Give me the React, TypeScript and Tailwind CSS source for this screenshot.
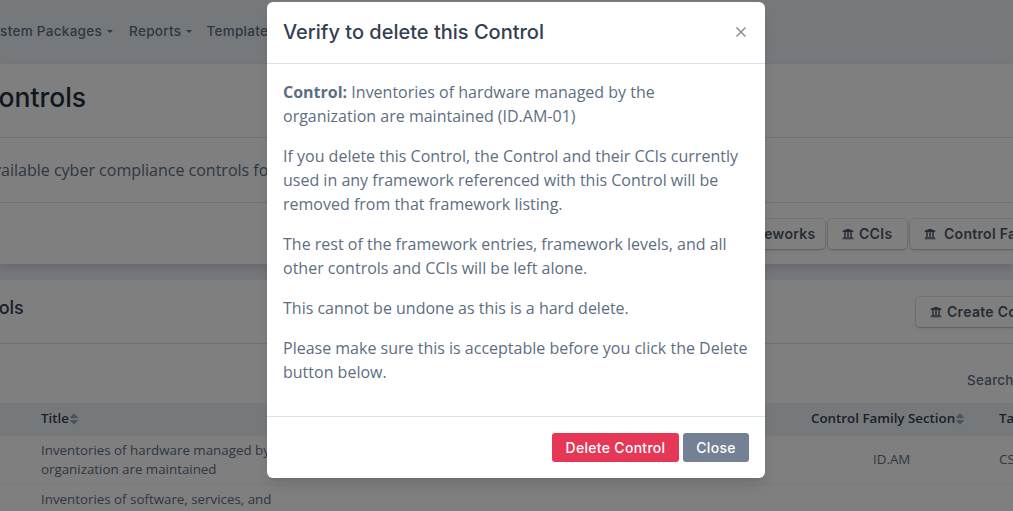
import { FaSort, FaUniversity } from 'react-icons/fa';

const heading = "font-['Inter','Noto_Sans',sans-serif]";
const body = "font-['Open_Sans','Noto_Sans',sans-serif]";
const buttonShadow = 'shadow-[0_0_0_1px_rgba(43,45,80,0.1),0_2px_5px_0_rgba(43,45,80,0.08),0_1px_1.5px_0_rgba(0,0,0,0.07),0_1px_2px_0_rgba(0,0,0,0.08)]';

function IconButton({ label, className }: { label: string; className: string }) {
  return (
    <div className={`flex h-[30px] shrink-0 items-center rounded bg-white pl-[14px] text-sm font-semibold tracking-[0.3px] whitespace-nowrap text-[#4d5969] ${buttonShadow} ${heading} ${className}`}>
      <FaUniversity className="h-3 w-3 shrink-0" />
      {label}
    </div>
  );
}

function SortHead({ label, className }: { label: string; className: string }) {
  return (
    <div className={`flex shrink-0 items-center text-[13.33px] font-semibold whitespace-nowrap text-[#344050] ${body} ${className}`}>
      {label}
      <FaSort className="h-3.5 w-2.5 text-[#9aa5b8]" />
    </div>
  );
}

function Caret() {
  return <i className="h-0 w-0 border-x-[3px] border-t-[3px] border-x-transparent border-t-[#5e6e82]" />;
}

function Background() {
  return (
    <div className="flex h-full flex-col bg-[#edf2f9]">
      {/* Navbar */}
      <div className={`flex h-16 shrink-0 items-center text-[13.5px] font-medium tracking-[0.3px] text-[#5e6e82] ${heading}`}>
        <div className="-ml-[17px] flex items-center gap-4 pb-0.5 whitespace-nowrap">
          <span className="flex items-center gap-[5px]">System Packages<Caret /></span>
          <span className="flex items-center gap-[5px]">Reports<Caret /></span>
          <span className="-ml-[2px]">Templates</span>
        </div>
      </div>

      {/* Page header */}
      <div className="relative bg-white shadow-[0_7px_14px_0_rgba(65,69,88,0.1),0_3px_6px_0_rgba(0,0,0,0.07)]">
        <div className="flex h-[74px] items-center border-b border-[#d8e2ef] pb-1.5">
          <h1 className={`-ml-[21px] text-[26.5px] font-medium text-[#232e3c] ${heading}`}>Controls</h1>
        </div>
        <div className="flex h-[65px] items-center border-b border-[#d8e2ef]">
          <p className={`-ml-[17px] text-base whitespace-nowrap text-[#5e6e82] ${body}`}>Available cyber compliance controls for</p>
        </div>
        <div className="flex h-[61px] items-center justify-end gap-[3px] overflow-hidden">
          <IconButton label="Frameworks" className="w-[128px] gap-[6px]" />
          <IconButton label="CCIs" className="w-[79px] gap-[5px]" />
          <IconButton label="Control Families" className="w-[190px] -mr-[87px] gap-2" />
        </div>
      </div>

      <div className="h-4 shrink-0" />

      {/* Table card */}
      <div className="flex-1 overflow-hidden bg-white">
        <div className="flex h-[64px] items-center justify-between overflow-hidden border-b border-[#d8e2ef]">
          <h2 className={`-ml-[49px] pb-2 text-lg font-medium text-[#344050] ${heading}`}>Controls</h2>
          <IconButton label="Create Control" className="w-[150px] -mr-[53px] gap-[5px]" />
        </div>
        <div className={`flex h-[59px] items-center justify-end pt-[14px] text-[13.33px] font-medium tracking-[0.3px] text-[#5e6e82] ${heading}`}>
          <span className="-mr-[5px]">Search:</span>
        </div>
        <div className="flex h-[33px] items-center bg-[#edf2f9] pb-px pl-[41px]">
          <SortHead label="Title" className="w-[770px]" />
          <SortHead label="Control Family Section" className="w-[188px]" />
          <SortHead label="Tags" className="" />
        </div>
        <div className={`flex h-[49px] items-center border-b border-[#f4f6fa] pl-[41px] text-[13.33px] leading-[19.5px] text-[#5e6e82] ${body}`}>
          <p className="w-[280px] shrink-0">Inventories of hardware managed by the organization are maintained</p>
          <span className="ml-[552px] w-[126px] shrink-0">ID.AM</span>
          <span>CSF</span>
        </div>
        <div className={`pt-[5px] pl-[41px] text-[13.33px] leading-[19.5px] text-[#5e6e82] ${body}`}>
          <p className="w-[280px]">Inventories of software, services, and</p>
        </div>
      </div>
    </div>
  );
}

function DeleteModal() {
  return (
    <div className="absolute inset-0 flex items-start justify-center bg-black/50 pt-0.5 pl-[19px]">
      <div className="flex h-[476px] w-[498px] flex-col rounded-md bg-white shadow-lg">
        <div className="flex h-[62px] shrink-0 items-center justify-between border-b border-[#d8e2ef] px-4 pb-0.5">
          <h3 className={`text-xl font-medium text-[#344050] ${heading}`}>Verify to delete this Control</h3>
          <svg className="mr-[2px] h-3 w-3 text-[#8a8f98]" viewBox="0 0 12 12" fill="none" stroke="currentColor" strokeWidth="1.5">
            <path d="M1.5 1.5l9 9M10.5 1.5l-9 9" />
          </svg>
        </div>
        <div className={`flex-1 space-y-4 p-4 text-base leading-6 text-[#5e6e82] ${body}`}>
          <p><strong className="font-bold">Control:</strong> Inventories of hardware managed by the organization are maintained (ID.AM-01)</p>
          <p>If you delete this Control, the Control and their CCIs currently used in any framework referenced with this Control will be removed from that framework listing.</p>
          <p>The rest of the framework entries, framework levels, and all other controls and CCIs will be left alone.</p>
          <p>This cannot be undone as this is a hard delete.</p>
          <p>Please make sure this is acceptable before you click the Delete button below.</p>
        </div>
        <div className={`flex h-[62px] shrink-0 items-center justify-end gap-1 border-t border-[#d8e2ef] px-4 text-sm font-medium tracking-[0.3px] text-white ${heading}`}>
          <button className="h-[29px] w-[127px] rounded-[3px] bg-[#e63757]">Delete Control</button>
          <button className="h-[29px] w-[66px] rounded-[3px] bg-[#748194]">Close</button>
        </div>
      </div>
    </div>
  );
}

export default function App() {
  return (
    <div className="relative h-[511px] w-[1013px] overflow-hidden">
      <Background />
      <DeleteModal />
    </div>
  );
}
